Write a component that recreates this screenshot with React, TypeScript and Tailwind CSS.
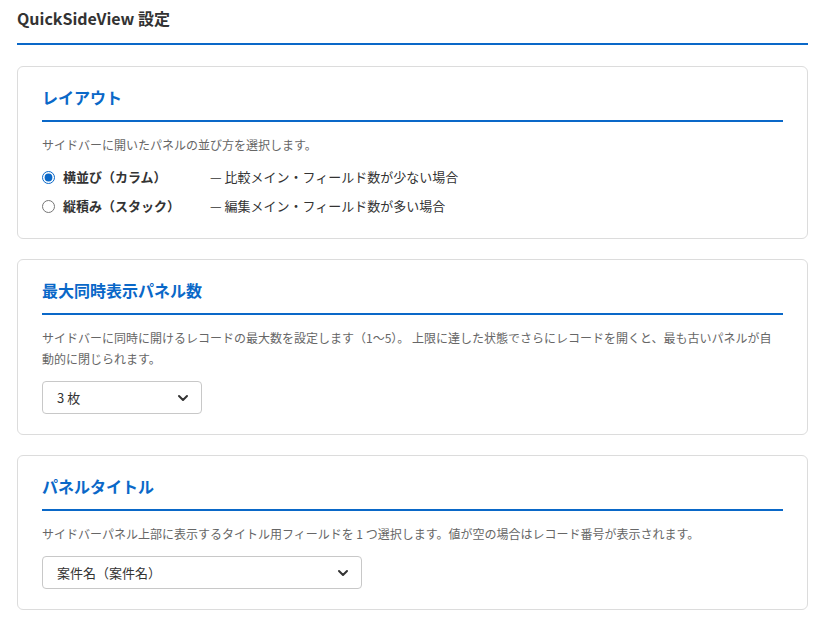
import React, { useState } from "react";

const font = { fontFamily: '"Noto Sans CJK JP", "Noto Sans", sans-serif' };

function Chevron() {
  return (
    <svg className="w-4 h-4 text-[#333]" fill="none" stroke="currentColor" viewBox="0 0 24 24">
      <path strokeLinecap="round" strokeLinejoin="round" strokeWidth="3" d="M6 9l6 6 6-6" />
    </svg>
  );
}

function Card({ title, children }: { title: string; children: React.ReactNode }) {
  return (
    <div className="border border-[#dcdcdc] rounded-md px-6 pt-[18px] pb-5 bg-white">
      <h2 className="text-[16px] leading-6 font-bold text-[#0a68c8] pb-[11px] border-b-2 border-[#0a68c8]">{title}</h2>
      {children}
    </div>
  );
}

function Select({ value, width }: { value: string; width: string }) {
  return (
    <div className={`mt-3 h-[33px] ${width} border border-[#c8c8c8] rounded flex items-center justify-between pl-[14px] pr-[10px] text-[13px] text-[#333]`}>
      <span>{value}</span>
      <Chevron />
    </div>
  );
}

export default function App() {
  const [layout, setLayout] = useState("column");
  const options = [
    { key: "column", label: "横並び（カラム）", note: "— 比較メイン・フィールド数が少ない場合" },
    { key: "stack", label: "縦積み（スタック）", note: "— 編集メイン・フィールド数が多い場合" },
  ];
  return (
    <div className="px-[17px] pt-[6px] pb-4 bg-white text-[#333]" style={font}>
      <h1 className="text-[16px] leading-6 font-bold text-[#333] pb-[13px] border-b-2 border-[#0a68c8]">QuickSideView 設定</h1>
      <div className="mt-[21px] flex flex-col gap-5">
        <Card title="レイアウト">
          <p className="mt-[13px] text-[12px] leading-5 text-[#666]">サイドバーに開いたパネルの並び方を選択します。</p>
          <div className="mt-[10px] flex flex-col gap-[5px]">
            {options.map((o) => (
              <label key={o.key} className="h-6 flex items-center gap-2 text-[13px] cursor-pointer">
                <input
                  type="radio"
                  name="layout"
                  checked={layout === o.key}
                  onChange={() => setLayout(o.key)}
                  className="w-[13px] h-[13px] accent-[#0a68c8] m-0"
                />
                <span className="font-bold w-[139px]">{o.label}</span>
                <span>{o.note}</span>
              </label>
            ))}
          </div>
        </Card>
        <Card title="最大同時表示パネル数">
          <p className="mt-3 text-[12px] leading-[21px] text-[#666]">
            サイドバーに同時に開けるレコードの最大数を設定します（1〜5）。 上限に達した状態でさらにレコードを開くと、最も古いパネルが自動的に閉じられます。
          </p>
          <Select value="3 枚" width="w-[160px]" />
        </Card>
        <Card title="パネルタイトル">
          <p className="mt-3 text-[12px] leading-[21px] text-[#666]">
            サイドバーパネル上部に表示するタイトル用フィールドを 1 つ選択します。値が空の場合はレコード番号が表示されます。
          </p>
          <Select value="案件名（案件名）" width="w-[320px]" />
        </Card>
      </div>
    </div>
  );
}
